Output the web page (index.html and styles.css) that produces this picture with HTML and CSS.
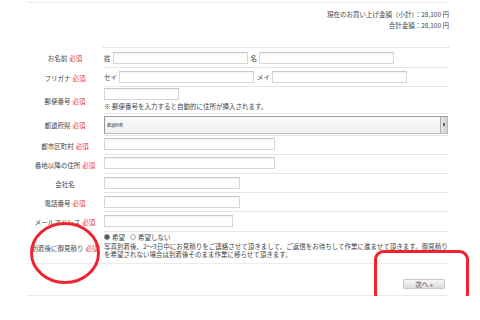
FILE: index.html
```html
<!DOCTYPE html>
<html lang="ja">
<head>
    <meta charset="UTF-8">
    <title>お客様情報の入力</title>
    <link rel="stylesheet" href="styles.css">
</head>
<body>
    <div class="page">
        <div class="topline"></div>
        <div class="totals">
            <p>現在のお買い上げ金額（小計）：28,100 円</p>
            <p>合計金額：28,100 円</p>
        </div>

        <div class="form">
            <div class="row row-name">
                <div class="label">お名前 <span class="req">必須</span></div>
                <div class="field">
                    <span class="pre">姓</span><input type="text" class="in-half">
                    <span class="pre pre-gap">名</span><input type="text" class="in-half">
                </div>
            </div>
            <div class="row row-kana">
                <div class="label">フリガナ <span class="req">必須</span></div>
                <div class="field">
                    <span class="pre">セイ</span><input type="text" class="in-half">
                    <span class="pre pre-gap">メイ</span><input type="text" class="in-half">
                </div>
            </div>
            <div class="row row-zip">
                <div class="label">郵便番号 <span class="req">必須</span></div>
                <div class="field field-stack">
                    <input type="text" class="in-zip">
                    <p class="note">※ 郵便番号を入力すると自動的に住所が挿入されます。</p>
                </div>
            </div>
            <div class="row row-pref">
                <div class="label">都道府県 <span class="req">必須</span></div>
                <div class="field">
                    <div class="select">
                        <span class="select-text">都道府県</span>
                        <span class="select-arrow"></span>
                    </div>
                </div>
            </div>
            <div class="row">
                <div class="label">都市区町村 <span class="req">必須</span></div>
                <div class="field"><input type="text" class="in-addr"></div>
            </div>
            <div class="row">
                <div class="label">番地以降の住所 <span class="req">必須</span></div>
                <div class="field"><input type="text" class="in-addr"></div>
            </div>
            <div class="row row-pad3">
                <div class="label">会社名</div>
                <div class="field"><input type="text" class="in-mid"></div>
            </div>
            <div class="row row-pad3">
                <div class="label">電話番号 <span class="req">必須</span></div>
                <div class="field"><input type="text" class="in-mid"></div>
            </div>
            <div class="row row-pad3 row-mail">
                <div class="label">メールアドレス <span class="req">必須</span></div>
                <div class="field"><input type="text" class="in-mail"></div>
            </div>
            <div class="row row-est">
                <div class="label">到着後に御見積り <span class="req">必須</span></div>
                <div class="field field-stack">
                    <div class="radios">
                        <span class="radio checked"></span><span>希望</span>
                        <span class="radio radio-gap"></span><span>希望しない</span>
                    </div>
                    <p class="desc">写真到着後、2～3日中にお見積りをご連絡させて頂きまして、ご返信をお待ちして作業に進ませて頂きます。御見積り<br>を希望されない場合は到着後そのまま作業に移らせて頂きます。</p>
                </div>
            </div>
        </div>

        <div class="actions">
            <button class="next">次へ »</button>
        </div>
    </div>

    <!-- red marks drawn over the screenshot -->
    <svg class="mark mark-circle" width="74" height="66" viewBox="0 0 74 66">
        <ellipse cx="37" cy="33" rx="33.5" ry="29.5" fill="none" stroke="#f0232e" stroke-width="3"/>
    </svg>
    <svg class="mark mark-box" width="98" height="56" viewBox="0 0 98 56">
        <rect x="1.5" y="1.5" width="92" height="50" rx="8" fill="none" stroke="#f0232e" stroke-width="3"/>
    </svg>
</body>
</html>
```

FILE: styles.css
```css
body {
    margin: 0;
    padding: 0;
    background: #fff;
    color: #444;
    font-family: "Noto Sans CJK JP", "Noto Sans", sans-serif;
    font-size: 6.5px;
    position: relative;
}

p {
    margin: 0;
}

.page {
    width: 422px;
    margin-left: 27px;
    padding-top: 2px;
}

.topline {
    border-top: 1px solid #ececec;
}

.totals {
    text-align: right;
    line-height: 11px;
    margin-top: 6px;
    height: 38px;
}

/* form rows */
.row {
    display: flex;
    height: 19px;
    box-sizing: border-box;
}

.row .label {
    width: 76px;
    flex-shrink: 0;
    display: flex;
    align-items: center;
    justify-content: center;
    white-space: nowrap;
}

.req {
    color: #e8323c;
    margin-left: 2px;
}

.field {
    flex: 1;
    display: flex;
    align-items: flex-start;
    padding: 2px 0 0 1px;
    border-bottom: 1px solid #e4e7ea;
    box-sizing: border-box;
}

.row-name {
    height: 21px;
}

.row-name .field {
    border-top: 1px dotted #cfd5db;
    padding-top: 4px;
}

.row-kana .field,
.row-pad3 .field {
    padding-top: 3px;
}

.row-zip {
    height: 27px;
}

.row-zip .field {
    padding-top: 1px;
}

.row-pref {
    height: 22px;
}

.row-mail {
    height: 20px;
}

.row-est {
    height: 32px;
    border-bottom: 1px solid #ececec;
}

.row-est .field {
    border-bottom: none;
    padding-top: 1px;
}

.field-stack {
    flex-direction: column;
}

.pre {
    line-height: 12px;
    margin-right: 2px;
}

.pre-gap {
    margin-left: 3px;
}

input[type="text"] {
    height: 12px;
    box-sizing: border-box;
    margin: 0;
    padding: 0;
    border: 1px solid #d6d6d6;
    border-top-color: #c8c8c8;
    box-shadow: inset 0 1px 1px rgba(0, 0, 0, 0.05);
    background: #fff;
}

.in-half {
    width: 135px;
}

.in-zip {
    width: 75px;
}

.in-addr {
    width: 171px;
}

.in-mid {
    width: 136px;
}

.in-mail {
    width: 129px;
}

.note {
    margin-top: 2px;
    line-height: 9px;
}

/* prefecture select */
.select {
    width: 344px;
    height: 18px;
    box-sizing: border-box;
    border: 1px solid #999;
    border-right-color: #bbb;
    border-bottom-color: #bbb;
    background: linear-gradient(#fafafa, #f0f0f0);
    display: flex;
    align-items: center;
    justify-content: space-between;
}

.select-text {
    font-size: 4px;
    padding-left: 2px;
    color: #333;
}

.select-arrow {
    width: 7px;
    height: 100%;
    box-sizing: border-box;
    border-left: 1px solid #aaa;
    background: linear-gradient(to right, #e8e8e8, #cfcfcf);
    position: relative;
}

.select-arrow::after {
    content: "";
    position: absolute;
    left: 2px;
    top: 6px;
    width: 2px;
    height: 3px;
    background: #666;
}

/* estimate radios */
.radios {
    display: flex;
    align-items: center;
    height: 8px;
    line-height: 8px;
}

.radio {
    width: 4px;
    height: 4px;
    border: 1px solid #aaa;
    border-radius: 50%;
    margin-right: 2px;
    background: #fff;
}

.radio.checked {
    background: #555;
    border-color: #888;
}

.radio-gap {
    margin-left: 5px;
}

.desc {
    margin-top: 1px;
    line-height: 8px;
    white-space: nowrap;
}

/* button area */
.actions {
    height: 32px;
    box-sizing: border-box;
    border-bottom: 1px solid #ececec;
    display: flex;
    justify-content: flex-end;
    align-items: flex-start;
    padding: 15px 4px 0 0;
}

.next {
    width: 42px;
    height: 10px;
    padding: 0;
    border: 1px solid #c8c8c8;
    border-radius: 1px;
    background: linear-gradient(#f6f6f6, #dcdcdc);
    font-family: inherit;
    font-size: 6.5px;
    line-height: 8px;
    color: #333;
}

/* annotation marks */
.mark {
    position: absolute;
    pointer-events: none;
}

.mark-circle {
    left: 28px;
    top: 220px;
}

.mark-box {
    left: 374px;
    top: 250px;
}
```
